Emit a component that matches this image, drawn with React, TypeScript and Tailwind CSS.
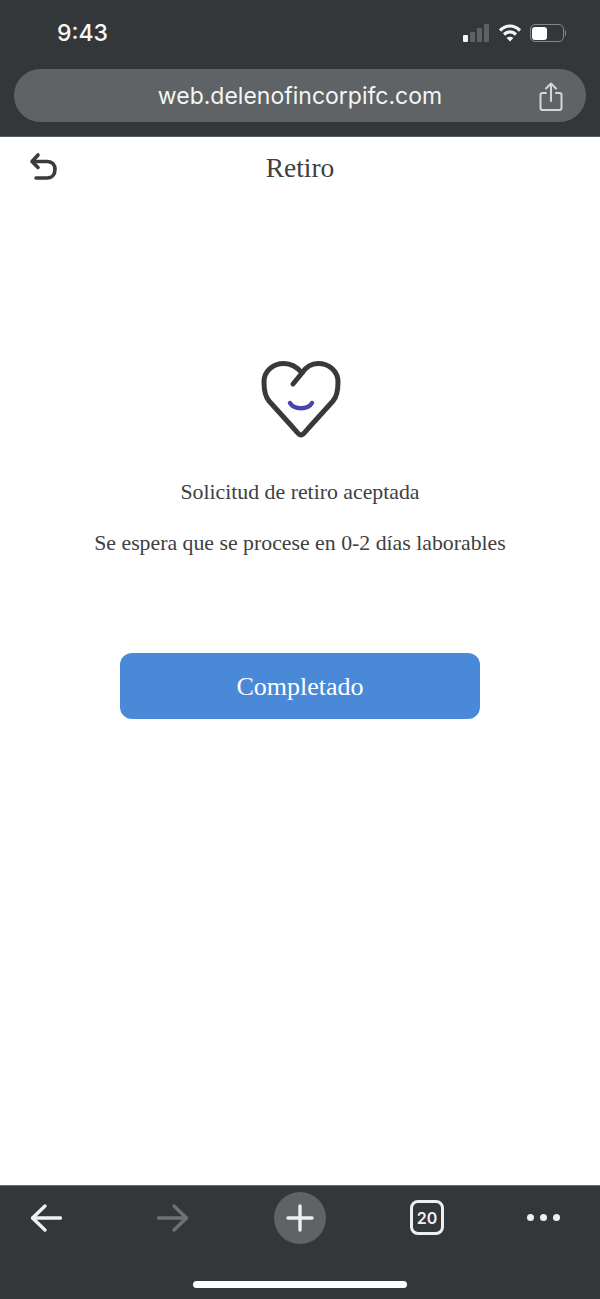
const inter = '[font-family:Inter,"Liberation_Sans",sans-serif]'

const StatusIcons = () => (
  <div className="mt-[4px] flex items-center">
    <svg width="28" height="20" viewBox="0 0 28 20">
      <rect x="1" y="12" width="5" height="7" rx="1" fill="#f4f5f5" />
      <rect x="8" y="9" width="5" height="10" rx="1" fill="#5d6164" />
      <rect x="15" y="5" width="5" height="14" rx="1" fill="#5d6164" />
      <rect x="22" y="1" width="5" height="18" rx="1" fill="#5d6164" />
    </svg>
    <svg className="ml-[8px]" width="24" height="20" viewBox="0 0 24 20" fill="none" stroke="#f4f5f5" strokeWidth="3.2">
      <path d="M2 7.5C8 1.5 16 1.5 22 7.5" />
      <path d="M6 11.5C9.5 8 14.5 8 18 11.5" />
      <path d="M12 18.5L8.6 15C10.5 13.3 13.5 13.3 15.4 15Z" fill="#f4f5f5" stroke="none" />
    </svg>
    <div className="ml-[8px] flex items-center">
      <div className="flex h-[18px] w-[34px] items-center rounded-[5px] border-[1.5px] border-[#85888a] p-[1.5px]">
        <div className="h-full w-[15px] rounded-[3px] bg-white" />
      </div>
      <div className="ml-[1px] h-[6px] w-[1.5px] rounded-r-sm bg-[#85888a]" />
    </div>
  </div>
)

const ShareIcon = () => (
  <svg width="24" height="30" viewBox="0 0 24 30" fill="none" stroke="#d4d6d7" strokeWidth="2" strokeLinecap="round" strokeLinejoin="round">
    <path d="M7 11H3.5C2 11 1.5 12 1.5 13V26C1.5 27.5 2.5 28 3.5 28H20.5C22 28 22.5 27 22.5 26V13C22.5 12 22 11 20.5 11H17" />
    <path d="M12 19V2" />
    <path d="M7 6.5L12 1.5L17 6.5" />
  </svg>
)

const HeartIcon = () => (
  <svg className="ml-[1px] blur-[0.6px]" width="80" height="80" viewBox="0 0 80 80" fill="none" strokeLinecap="round" strokeLinejoin="round">
    <path
      d="M32 25L41 14C45 8 50 4.5 57 4.5C68 4.5 77 12 77 23C77 31 75.5 38 72 42L48.5 68C44 73 42.5 76 40 76C37.5 76 36 73 31.5 68L8 42C4.5 38 3 31 3 23C3 12 12 4.5 23 4.5C30 4.5 36 8 41 14"
      stroke="#38393b"
      strokeWidth="5"
    />
    <path d="M29 44C33 51 47 51 51 44" stroke="#4a45ad" strokeWidth="4.5" />
  </svg>
)

const App = () => {
  return (
    <div className="flex h-[1299px] w-[600px] flex-col overflow-hidden bg-white">
      <header className={`h-[137px] shrink-0 border-b border-[#55585a] bg-[#33373a] ${inter}`}>
        <div className="flex h-[66px] items-start justify-between pl-[57px] pr-[34px] pt-[19px]">
          <span className="text-[23px] leading-[28px] font-medium text-[#f7f7f7]">9:43</span>
          <StatusIcons />
        </div>
        <div className="relative mx-[14px] mt-[3px] flex h-[53px] w-[572px] items-center justify-center rounded-full bg-[#5f6366]">
          <span className="text-[23px] leading-[28px] text-[#f4f5f5]">web.delenofincorpifc.com</span>
          <div className="absolute right-[23px] top-[13px]">
            <ShareIcon />
          </div>
        </div>
      </header>

      <main className='flex min-h-0 flex-1 flex-col items-center [font-family:"Liberation_Serif",serif]'>
        <div className="relative flex h-[61px] w-full items-center justify-center">
          <svg className="absolute left-[29px] top-[15px]" width="29" height="29" viewBox="0 0 29 29" fill="none" stroke="#3a3b3d" strokeWidth="3.6" strokeLinecap="round" strokeLinejoin="round">
            <path d="M9 3L3 9.5L9 15.5" />
            <path d="M4 9.5H18C23.5 9.5 26 13 26 17.5C26 22.5 23 26 18 26H7" />
          </svg>
          <span className="text-[27.5px] leading-[30px] text-[#404040]">Retiro</span>
        </div>

        <div className="mt-[161px]">
          <HeartIcon />
        </div>
        <p className="mt-[41px] text-[21.8px] leading-[24px] text-[#404040]">Solicitud de retiro aceptada</p>
        <p className="mt-[27px] text-[21.8px] leading-[24px] text-[#404040]">Se espera que se procese en 0-2 días laborables</p>

        <button className="mt-[98px] h-[66px] w-[360px] rounded-[12px] bg-[#4a89d8] text-[26px] text-white">
          Completado
        </button>
      </main>

      <footer className="relative h-[114px] shrink-0 border-t border-[#6b6e70] bg-[#33373a]">
        <div className={`flex h-[63px] items-center pl-[30px] ${inter}`}>
          <svg width="32" height="30" viewBox="0 0 32 30" fill="none" stroke="#f0f1f1" strokeWidth="3.4" strokeLinecap="round" strokeLinejoin="round">
            <path d="M15 3L2.5 15L15 27" />
            <path d="M3 15H30.5" />
          </svg>
          <svg className="ml-[95px]" width="32" height="30" viewBox="0 0 32 30" fill="none" stroke="#6e7275" strokeWidth="3.4" strokeLinecap="round" strokeLinejoin="round">
            <path d="M17 3L29.5 15L17 27" />
            <path d="M1.5 15H29" />
          </svg>
          <div className="ml-[85px] flex h-[52px] w-[52px] items-center justify-center rounded-full bg-[#5f6366]">
            <svg width="28" height="28" viewBox="0 0 28 28" fill="none" stroke="#eeeff0" strokeWidth="3.4" strokeLinecap="round">
              <path d="M14 2V26" />
              <path d="M2 14H26" />
            </svg>
          </div>
          <div className="ml-[84px] flex h-[35px] w-[34px] items-center justify-center rounded-[8px] border-[3px] border-[#eeeff0] text-[16px] leading-none font-semibold text-[#f0f1f1]">
            20
          </div>
          <div className="ml-[83px] flex gap-[6px]">
            <div className="h-[7px] w-[7px] rounded-full bg-[#eeeff0]" />
            <div className="h-[7px] w-[7px] rounded-full bg-[#eeeff0]" />
            <div className="h-[7px] w-[7px] rounded-full bg-[#eeeff0]" />
          </div>
        </div>
        <div className="absolute bottom-[11px] left-[193px] h-[7px] w-[214px] rounded-full bg-white" />
      </footer>
    </div>
  )
}

export default App
